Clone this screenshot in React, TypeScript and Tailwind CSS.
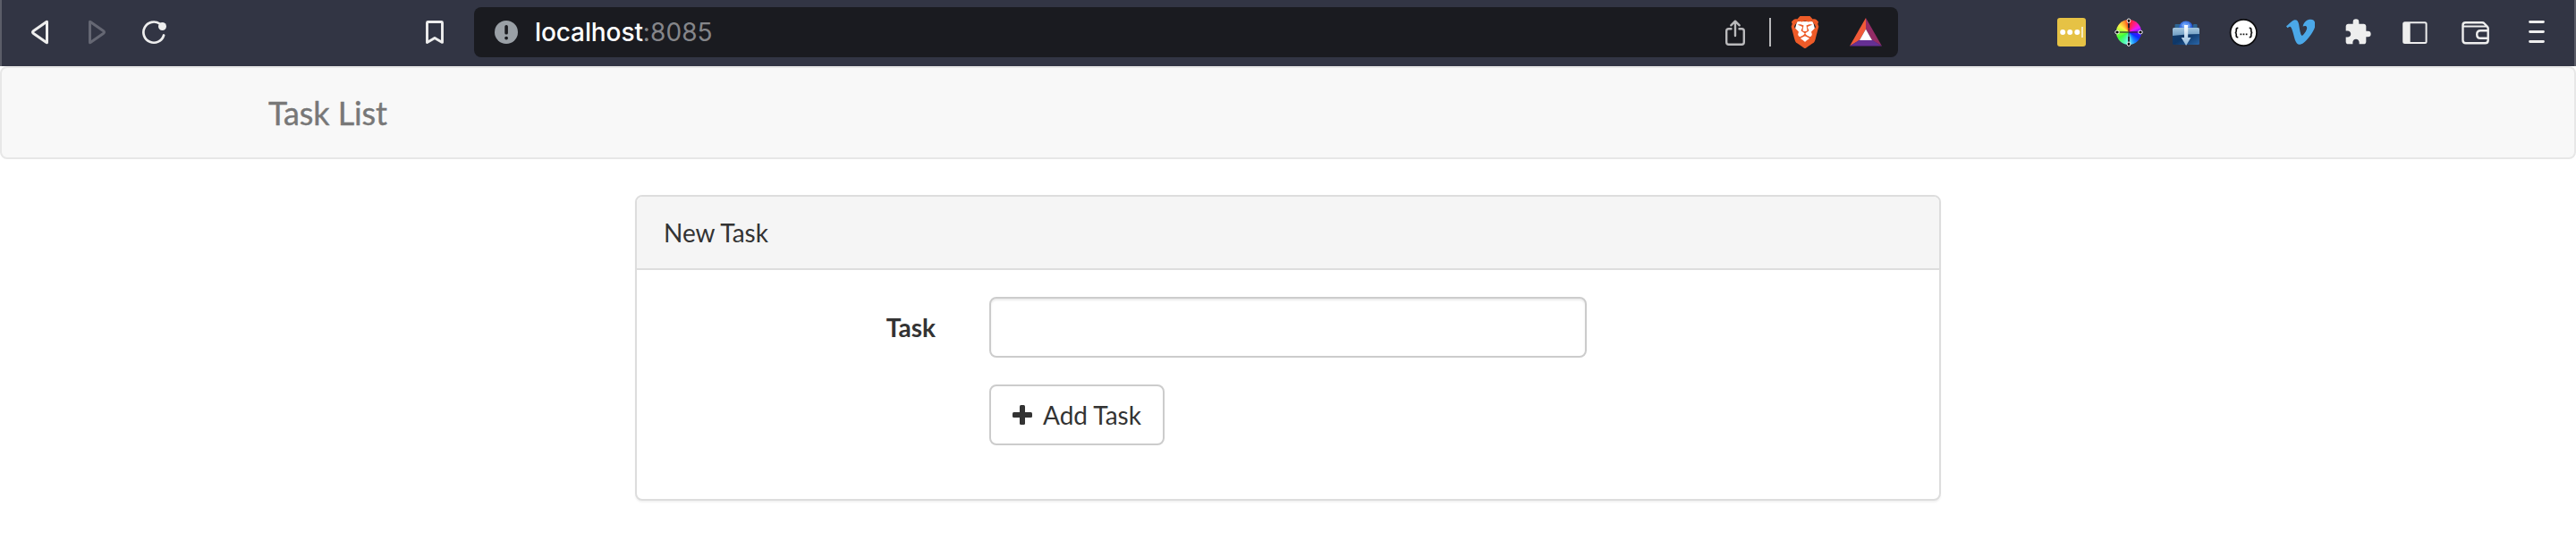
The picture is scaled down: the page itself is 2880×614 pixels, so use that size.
import type { ReactNode } from "react";
import { FaVimeoV } from "react-icons/fa";
import { MdExtension } from "react-icons/md";
import { SiBrave } from "react-icons/si";

const INK = "#eeeeee";

function BackIcon() {
  return (
    <svg className="h-8 w-5" viewBox="0 0 20 32" fill="none" stroke={INK} strokeWidth="3" strokeLinejoin="round">
      <path d="M17.500 4.600v22.800q0 .5-.6.1L2.200 17.200q-1.400-1.200 0-2.400L16.900 4.500q.6-.4.6.1z" />
    </svg>
  );
}

function ForwardIcon() {
  return (
    <svg className="h-8 w-5" viewBox="0 0 20 32" fill="none" stroke="#656773" strokeWidth="3" strokeLinejoin="round">
      <path d="M2.500 4.600v22.800q0 .5.6.1L17.800 17.200q1.400-1.200 0-2.400L3.100 4.500q-.6-.4-.6.1z" />
    </svg>
  );
}

function ReloadIcon() {
  return (
    <svg className="h-8 w-7" viewBox="0 0 28 32" fill="none" stroke={INK} strokeWidth="2.700" strokeLinecap="round">
      <path d="M25.100 19.500A11.600 11.600 0 1 1 20.500 6.500" />
      <circle cx="23.500" cy="9.500" r="4.500" fill={INK} stroke="none" />
    </svg>
  );
}

function BookmarkIcon() {
  return (
    <svg className="h-8 w-[22px]" viewBox="0 0 22 32" fill="none" stroke={INK} strokeWidth="2.900" strokeLinejoin="round">
      <path d="M2.500 5.500q0-1 1-1h15q1 0 1 1v21.900L11 22.400l-8.500 5z" />
    </svg>
  );
}

function InfoIcon() {
  return (
    <svg className="h-[26px] w-[26px]" viewBox="0 0 26 26">
      <circle cx="13" cy="13" r="13" fill="#9aa0a6" />
      <rect x="11.300" y="5" width="3.600" height="10.600" rx="1.700" fill="#1a1b20" />
      <circle cx="13.100" cy="19.600" r="1.900" fill="#1a1b20" />
    </svg>
  );
}

function ShareIcon() {
  return (
    <svg className="h-8 w-6" viewBox="0 0 24 32" fill="none" stroke="#bababc" strokeWidth="2.400" strokeLinecap="round" strokeLinejoin="round">
      <path d="M7.500 12.300H4.700q-2.500 0-2.500 2.500v12.500q0 2.500 2.500 2.500h14.600q2.500 0 2.500-2.500V14.800q0-2.500-2.500-2.500h-2.800" />
      <path d="M12 20V4M7.300 8.300L12 3.700l4.700 4.600" />
    </svg>
  );
}

function BraveLogo() {
  return (
    <svg className="h-9 w-8" viewBox="0 0 32 36">
      <path d="M7 6h18l2 8-4 13-7 5-7-5-4-13z" fill="#fff" />
      <SiBrave x={-2} y={0} size={36} color="#ed5b28" />
    </svg>
  );
}

function RewardsLogo() {
  return (
    <svg className="h-8 w-9" viewBox="0 0 36 32">
      <path d="M18 0L0 31.500l11-6.500 7-12.500z" fill="#f15a38" />
      <path d="M18 0l18 31.500L25 25l-7-12.500z" fill="#942c66" />
      <path d="M0 31.500h36L25 24.500H11z" fill="#652f93" />
      <path d="M18 12.500L11 25h14z" fill="#fff" />
    </svg>
  );
}

function PasswordIcon() {
  return (
    <svg className="h-8 w-8" viewBox="0 0 32 32">
      <rect width="32" height="32" rx="3" fill="#e6c245" />
      <g fill="#fff">
        <circle cx="6.200" cy="16" r="3" />
        <circle cx="14.200" cy="16" r="3" />
        <circle cx="22.300" cy="16" r="3" />
      </g>
      <rect x="27" y="10" width="2" height="12" fill="#f7ebbf" />
    </svg>
  );
}

function ColorWheelIcon() {
  return (
    <div className="grid h-8 w-8 place-items-center rounded-full bg-[conic-gradient(#ff2a1a,#ff1a9a_40deg,#e61aff_65deg,#4a10ff_95deg,#0a2cff_120deg,#1a8cff_150deg,#7affff_180deg,#4cf7a0_210deg,#3cff3c_240deg,#a8ff3c_275deg,#fff04a_305deg,#ff9a2a_335deg,#ff2a1a_360deg)] bg-clip-content p-0.5">
      <svg className="-m-0.5 h-8 w-8" viewBox="0 0 32 32">
        <path d="M16 4v24M4 16h24" stroke="#20202a" strokeOpacity=".75" strokeWidth="1.300" />
        <path d="M16 4v7M16 21v7" stroke="#20202a" strokeWidth="1.800" />
        <g fill="#000" stroke="#fff" strokeWidth="1">
          <rect x="14.200" y="1" width="3.600" height="4.400" rx="1.800" />
          <rect x="14.200" y="27" width="3.600" height="4.400" rx="1.800" />
          <rect x=".8" y="14.200" width="4.400" height="3.600" rx="1.800" />
          <rect x="26.800" y="14.200" width="4.400" height="3.600" rx="1.800" />
        </g>
      </svg>
    </div>
  );
}

function DownloadFolderIcon() {
  return (
    <svg className="h-8 w-8" viewBox="0 0 32 32">
      <defs>
        <linearGradient id="folderFront" x1="0" y1="0" x2="1" y2="1">
          <stop offset="0" stopColor="#16406e" />
          <stop offset=".5" stopColor="#0e3768" />
          <stop offset="1" stopColor="#2a66a8" />
        </linearGradient>
        <linearGradient id="folderBand" x1="0" y1="0" x2="0" y2="1">
          <stop offset="0" stopColor="#a5c6de" />
          <stop offset="1" stopColor="#6f9dc3" />
        </linearGradient>
        <radialGradient id="globe" cx=".45" cy=".3" r=".8">
          <stop offset="0" stopColor="#6fa8ff" />
          <stop offset=".6" stopColor="#2458d0" />
          <stop offset="1" stopColor="#123a9a" />
        </radialGradient>
        <linearGradient id="folderArrow" x1="0" y1="0" x2="0" y2="1">
          <stop offset="0" stopColor="#ffffff" />
          <stop offset="1" stopColor="#8fb9dc" />
        </linearGradient>
      </defs>
      <path d="M3.500 8q0-1 1-1h4.500q1 0 1 1v4h14V8q0-1 1-1h2.500q1 0 1 1v4H3.500z" fill="#2d6594" />
      <circle cx="16" cy="11.500" r="8" fill="url(#globe)" />
      <path d="M11 8l3-2 2 2-3 3zM18 6l3 2-1 3-3-2z" fill="#8ab6f5" opacity=".6" />
      <rect x="1" y="11" width="30" height="19" rx="1.500" fill="url(#folderFront)" />
      <path d="M1 12.500q0-1.500 1.500-1.500h27q1.500 0 1.500 1.500V18q-15 0-30 2z" fill="url(#folderBand)" />
      <path d="M14 8h4.200v14h3.300L16.100 31l-5.400-9H14z" fill="url(#folderArrow)" />
    </svg>
  );
}

function JsonIcon() {
  return (
    <svg className="h-8 w-8" viewBox="0 0 32 32" fill="none">
      <circle cx="16.300" cy="16.500" r="14.700" fill="#fff" stroke="#0c0c0e" strokeWidth="1.700" />
      <g stroke="#111" strokeWidth="1.700">
        <path d="M10.300 11.300H9.700q-1.500 0-1.500 1.500v2q0 1.700-1.500 1.700 1.500 0 1.500 1.700v2q0 1.500 1.500 1.500h.6" />
        <path d="M22.700 11.300h.6q1.500 0 1.500 1.500v2q0 1.700 1.500 1.700-1.500 0-1.500 1.700v2q0 1.500-1.500 1.500h-.6" />
      </g>
      <g fill="#111">
        <rect x="12.500" y="17.500" width="1.700" height="1.700" />
        <rect x="15.600" y="17.500" width="1.700" height="1.700" />
        <rect x="18.800" y="17.500" width="1.700" height="1.700" />
      </g>
    </svg>
  );
}

function VimeoIcon() {
  return (
    <svg className="h-8 w-8" viewBox="0 0 32 32">
      <FaVimeoV x={-2.3} y={-2.8} size={37} color="#4ba8e8" />
    </svg>
  );
}

function SidebarIcon() {
  return (
    <svg className="h-8 w-8" viewBox="0 0 32 32">
      <rect x="3.200" y="5.200" width="25.400" height="22.800" rx="1.500" fill="none" stroke={INK} strokeWidth="2" />
      <path d="M3 5h7.700v23H3z" fill={INK} />
    </svg>
  );
}

function WalletIcon() {
  return (
    <svg className="h-8 w-8" viewBox="0 0 32 32" fill="none" stroke={INK} strokeWidth="2.400" strokeLinejoin="round">
      <path d="M4.500 5.300h18.700q1.400 0 2.300 1l3.400 3.600q.8.800.8 2V25q0 3.300-3.300 3.300H4.700q-3.200 0-3.200-3.200V8.300q0-3 3-3z" />
      <path d="M2 9.500h26" strokeWidth="2" />
      <path d="M29.500 14.200h-8.300q-4 0-4 4.300t4 4.300h8.300" />
    </svg>
  );
}

function MenuIcon() {
  return (
    <svg className="h-8 w-8" viewBox="0 0 32 32" stroke={INK} strokeWidth="2.800" strokeLinecap="round">
      <path d="M8.500 4.500h15M8.500 15.500h15M8.500 26.500h15" />
    </svg>
  );
}

function AddressBar() {
  return (
    <div className="ml-[33px] flex h-14 w-[1592px] items-center rounded-lg bg-[#1a1b20] pl-[23px] pr-[18px]">
      <InfoIcon />
      <div className="ml-[19px] font-['Inter',sans-serif] text-[28px] leading-8 font-medium tracking-[-0.1px] text-white">
        localhost<span className="font-normal tracking-[0.1px] text-[#85868a]">:8085</span>
      </div>
      <div className="ml-auto flex items-center">
        <ShareIcon />
        <div className="ml-[26px] h-8 w-0.5 bg-[#b8b8ba]" />
        <div className="ml-[22px]">
          <BraveLogo />
        </div>
        <div className="ml-[34px]">
          <RewardsLogo />
        </div>
      </div>
    </div>
  );
}

function BrowserToolbar() {
  return (
    <header className="flex h-[74px] items-center border-x-2 border-[#5b5d68] bg-[#323544] pb-0.5 pl-[33px]">
      <BackIcon />
      <div className="ml-[43px]">
        <ForwardIcon />
      </div>
      <div className="ml-10">
        <ReloadIcon />
      </div>
      <div className="ml-[289px]">
        <BookmarkIcon />
      </div>
      <AddressBar />
      <div className="ml-[178px] flex items-center gap-8">
        <PasswordIcon />
        <ColorWheelIcon />
        <DownloadFolderIcon />
        <JsonIcon />
        <VimeoIcon />
        <MdExtension size={32} color={INK} />
        <SidebarIcon />
      </div>
      <div className="ml-9 flex items-center gap-9">
        <WalletIcon />
        <MenuIcon />
      </div>
    </header>
  );
}

function Panel({ title, children }: { title: string; children: ReactNode }) {
  return (
    <section className="mx-auto mt-10 h-[342px] w-[1460px] rounded-lg border-2 border-[#dddddd] bg-white shadow-[0_2px_2px_rgba(0,0,0,0.05)]">
      <h2 className="h-[82px] rounded-t-md border-b-2 border-[#dddddd] bg-[#f5f5f5] px-[30px] py-5 leading-10">{title}</h2>
      {children}
    </section>
  );
}

export default function App() {
  return (
    <div className="h-[614px] w-[2880px] overflow-hidden bg-white font-['Lato',sans-serif] text-[28px] text-[#333333]">
      <BrowserToolbar />
      <nav className="flex h-[104px] items-center rounded-lg border-2 border-[#e7e7e7] bg-[#f8f8f8] pl-[298px] text-[36px] leading-10 tracking-[-0.1px] text-[#777777] [-webkit-text-stroke:0.4px_#777777]">
        Task List
      </nav>
      <Panel title="New Task">
        <form className="grid grid-cols-[334px_668px] gap-x-[60px] gap-y-[30px] pt-[30px]">
          <label htmlFor="task" className="pt-[14px] text-right font-bold leading-10">
            Task
          </label>
          <input
            id="task"
            type="text"
            className="h-[68px] rounded-lg border-2 border-[#cccccc] bg-white px-6 shadow-[inset_0_2px_2px_rgba(0,0,0,0.075)]"
          />
          <button
            type="button"
            className="col-start-2 flex h-[68px] w-[196px] items-center gap-3 rounded-lg border-2 border-[#cccccc] bg-white pl-6 leading-10"
          >
            <svg className="h-[22px] w-[22px]" viewBox="0 0 22 22" fill="#333333">
              <rect x="8" width="6" height="22" rx="1.500" />
              <rect y="8" width="22" height="6" rx="1.500" />
            </svg>
            Add Task
          </button>
        </form>
      </Panel>
    </div>
  );
}
